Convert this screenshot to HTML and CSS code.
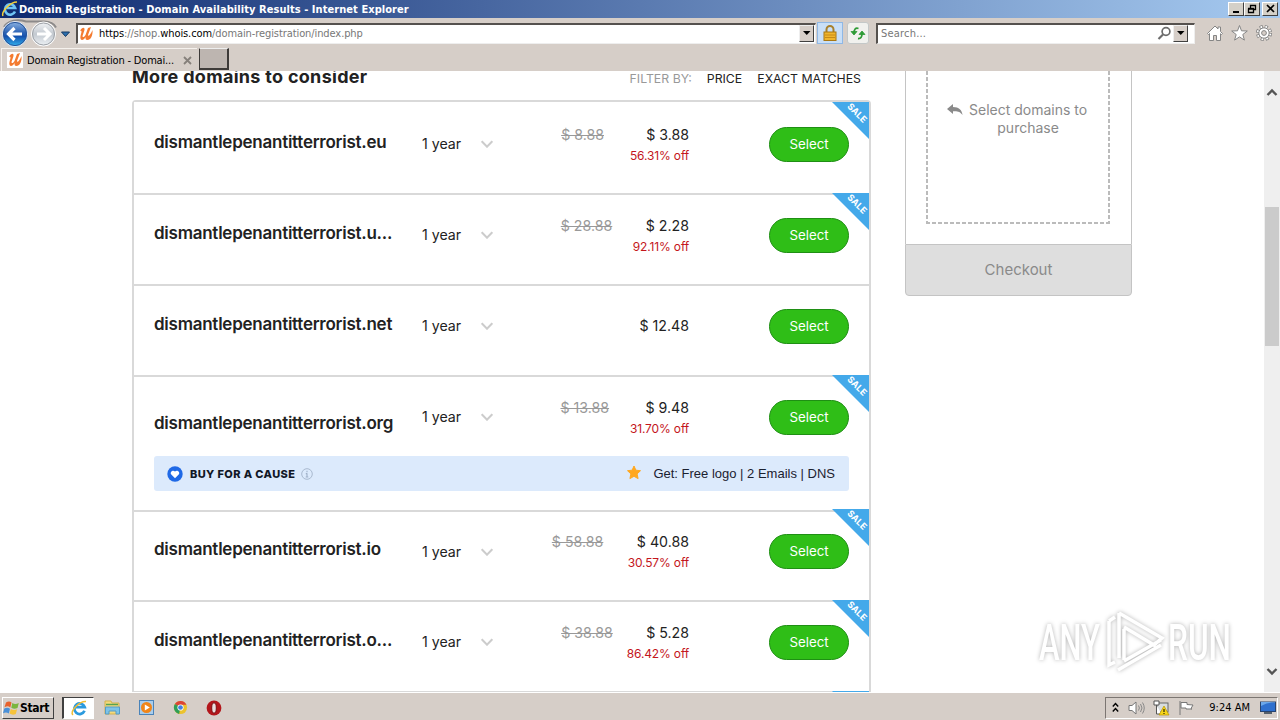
FILE: index.html
```html
<!DOCTYPE html>
<html lang="en">
<head>
    <meta charset="UTF-8">
    <title>Domain Registration - Domain Availability Results</title>
    <link rel="stylesheet" href="styles.css">
</head>
<body>
    <div class="titlebar">
        <svg class="ie" width="18" height="18" viewBox="0 0 18 18"><path d="M14 11.5A5.2 5.2 0 1 1 14.2 8H6" fill="none" stroke="#6fc4f5" stroke-width="2.6"/><path d="M2 16C0 12 9 2 16 2" fill="none" stroke="#f4d03a" stroke-width="1.5"/></svg>
        <span class="title">Domain Registration - Domain Availability Results - Internet Explorer</span>
        <div class="winbtns">
            <button class="winbtn"><svg width="11" height="10"><path d="M2 8h6" stroke="#000" stroke-width="2"/></svg></button>
            <button class="winbtn"><svg width="11" height="10"><path d="M3.5 4V1.5h5v4H7M1 4.5h5.5v4h-5v-4M3 1.5h6M1 5h6" fill="none" stroke="#000" stroke-width="1.3"/></svg></button>
            <button class="winbtn close"><svg width="11" height="10"><path d="M2 1l7 7M9 1L2 8" stroke="#000" stroke-width="1.7"/></svg></button>
        </div>
    </div>

    <div class="navbar">
        <svg class="backfwd" width="72" height="30" viewBox="0 0 72 30">
            <defs>
                <linearGradient id="blue" x1="0" y1="0" x2="0" y2="1"><stop offset="0" stop-color="#8fb6e4"/><stop offset=".45" stop-color="#2b62b4"/><stop offset=".6" stop-color="#1552ae"/><stop offset="1" stop-color="#35b7f2"/></linearGradient>
                <linearGradient id="grey" x1="0" y1="0" x2="0" y2="1"><stop offset="0" stop-color="#f3f5f7"/><stop offset=".5" stop-color="#c3c9d0"/><stop offset="1" stop-color="#eef3f6"/></linearGradient>
            </defs>
            <path d="M4 9C8 2 18 1 26 3.500H44c7 0 10 2 12 6" fill="none" stroke="#8c8a8a" stroke-width="2"/>
            <circle cx="15" cy="16" r="12.5" fill="url(#blue)" stroke="#e8eef6"/>
            <circle cx="15" cy="16" r="11.6" fill="none" stroke="#27549a"/>
            <path d="M8 16h14M14.5 10L8.5 16l6 6" fill="none" stroke="#fff" stroke-width="3.2"/>
            <circle cx="43.500" cy="16" r="12" fill="url(#grey)" stroke="#fff"/>
            <circle cx="43.500" cy="16" r="11" fill="none" stroke="#9da1a7"/>
            <path d="M37 16h13M44 10l6 6-6 6" fill="none" stroke="#fff" stroke-width="3"/>
            <path d="M61.500 14h8l-4 4.500z" fill="#2c6fae" stroke="#163a63"/>
        </svg>
        <div class="address">
            <svg width="16" height="16" viewBox="0 0 16 16"><path d="M2 5C4 1 7 1 6.500 4L4.500 10c0 2 2 1 3-1L10 2l3-1-3 8c0 2 2.500 0 4.500-5 .5 6-2 10-5 10-2 0-2-1-2-3-2 4-6 4-5-1l1-4c0-1-.5-1.500-1.500-1z" fill="#f47b30"/></svg>
            <span class="url">https<i>://shop.</i>whois.com<i>/domain-registration/index.php</i></span>
            <button class="drop"><svg width="8" height="5"><path d="M0 0h7.500L3.750 4z"/></svg></button>
        </div>
        <div class="lock"><svg width="16" height="18" viewBox="0 0 16 18"><path d="M4.500 9V5.500a3.500 3.500 0 0 1 7 0V9" fill="none" stroke="#a8802c" stroke-width="2"/><rect x="2" y="8" width="12" height="8.500" fill="#f0b52c" stroke="#a87713"/><path d="M3 11h10M3 13.500h10" stroke="#c78a16"/></svg></div>
        <div class="refresh"><svg width="18" height="16" viewBox="0 0 18 16" fill="none" stroke="#2f9b36" stroke-width="1.800"><path d="M9.500 3.500Q5 2 5 8.500"/><path d="M2 6.500h6L5 10z" fill="#2f9b36" stroke-width=".8"/><path d="M9 13.500Q13 14 13 8.500"/><path d="M10 9.500h6L13 6z" fill="#2f9b36" stroke-width=".8"/></svg></div>
        <div class="searchbox">
            <span class="hint">Search...</span>
            <svg width="15" height="15" viewBox="0 0 15 15"><circle cx="9" cy="5.500" r="3.900" fill="none" stroke="#6c6c6c" stroke-width="1.700"/><path d="M6 8.500L1.500 13" stroke="#6c6c6c" stroke-width="2.200"/></svg>
            <button class="drop"><svg width="8" height="5"><path d="M0 0h7.500L3.750 4z"/></svg></button>
        </div>
        <svg class="tools" width="68" height="20" viewBox="0 0 68 20" fill="#fff" stroke="#858585">
            <path d="M1.500 10.500L9 3l3 3V4h2.500v4.500l2 2-1 1-1-.8V17.500h-4v-5h-3v5h-4v-7l-1 1z"/>
            <path d="M33.500 2.500l2 5.300 5.800.2-4.500 3.500 1.600 5.600-4.900-3.200-4.900 3.200 1.600-5.600-4.500-3.500 5.800-.2z"/>
            <circle cx="58" cy="10" r="6.300" fill="none" stroke-width="3.600" stroke-dasharray="2.950 2"/>
            <circle cx="58" cy="10" r="6.100" fill="none" stroke="#fff" stroke-width="2.400" stroke-dasharray="1.600 3.190" stroke-dashoffset="-.6"/>
            <circle cx="58" cy="10" r="5.200"/><circle cx="58" cy="10" r="2.400" fill="#d6cec8"/>
        </svg>
    </div>

    <div class="tabs">
        <div class="tab">
            <svg width="16" height="16" viewBox="0 0 16 16"><rect width="16" height="16" fill="#fff"/><path d="M2 5C4 1 7 1 6.500 4L4.500 10c0 2 2 1 3-1L10 2l3-1-3 8c0 2 2.500 0 4.500-5 .5 6-2 10-5 10-2 0-2-1-2-3-2 4-6 4-5-1l1-4c0-1-.5-1.500-1.500-1z" fill="#f47b30"/></svg>
            <span class="tabname">Domain Registration - Domai...</span>
            <svg class="tabclose" width="9" height="9"><path d="M1 1l7 7M8 1L1 8" stroke="#86807b" stroke-width="1.800"/></svg>
        </div>
        <div class="newtab"></div>
    </div>

    <div class="page">
        <div class="main">
            <div class="head">
                <h2>More domains to consider</h2>
                <div class="filter"><span class="by">FILTER BY:</span><span class="fprice">PRICE</span><span class="fexact">EXACT MATCHES</span></div>
            </div>
            <div class="list">
                <div class="row">
                    <div class="domain">dismantlepenantitterrorist.eu</div>
                    <div class="term"><span>1 year</span><svg width="12" height="8"><path d="M.7 1.200L6 6.700l5.300-5.500"/></svg></div>
                    <div class="cost"><s>$ 8.88</s><b>$ 3.88</b><em>56.31% off</em></div>
                    <button class="select">Select</button>
                    <div class="sale"><span>SALE</span></div>
                </div>
                <div class="row">
                    <div class="domain">dismantlepenantitterrorist.u...</div>
                    <div class="term"><span>1 year</span><svg width="12" height="8"><path d="M.7 1.200L6 6.700l5.300-5.500"/></svg></div>
                    <div class="cost"><s>$ 28.88</s><b>$ 2.28</b><em>92.11% off</em></div>
                    <button class="select">Select</button>
                    <div class="sale"><span>SALE</span></div>
                </div>
                <div class="row">
                    <div class="domain">dismantlepenantitterrorist.net</div>
                    <div class="term"><span>1 year</span><svg width="12" height="8"><path d="M.7 1.200L6 6.700l5.300-5.500"/></svg></div>
                    <div class="cost single"><b>$ 12.48</b></div>
                    <button class="select">Select</button>
                </div>
                <div class="row tall">
                    <div class="domain">dismantlepenantitterrorist.org</div>
                    <div class="term"><span>1 year</span><svg width="12" height="8"><path d="M.7 1.200L6 6.700l5.300-5.500"/></svg></div>
                    <div class="cost"><s>$ 13.88</s><b>$ 9.48</b><em>31.70% off</em></div>
                    <button class="select">Select</button>
                    <div class="sale"><span>SALE</span></div>
                    <div class="cause">
                        <svg width="16" height="16" viewBox="0 0 16 16"><circle cx="8" cy="8" r="7.700" fill="#1f69e6"/><path d="M8 12.300L4.300 8.600C2.500 6.500 5.500 3.200 8 5.500c2.500-2.300 5.500 1 3.700 3.100z" fill="#fff"/></svg>
                        <span class="causename">BUY FOR A CAUSE</span>
                        <svg class="info" width="12" height="12" viewBox="0 0 12 12"><circle cx="6" cy="6" r="5.300" fill="none" stroke="#a9b9cf"/><path d="M6 2.800v1.500M6 5.300v3.900M4.800 5.600h1.200M4.700 9h2.600" stroke="#9fb0c8" stroke-width="1.100"/></svg>
                        <svg class="star" width="14" height="15" viewBox="0 0 14 15"><path d="M7 1l1.900 4.200 4.600.5-3.400 3.200 1 4.700L7 11.300l-4.100 2.300 1-4.700L.5 5.700l4.600-.5z" fill="#ffa820" stroke="#ffa820" stroke-linejoin="round"/></svg>
                        <span class="perks">Get: Free logo | 2 Emails | DNS</span>
                    </div>
                </div>
                <div class="row after">
                    <div class="domain">dismantlepenantitterrorist.io</div>
                    <div class="term"><span>1 year</span><svg width="12" height="8"><path d="M.7 1.200L6 6.700l5.300-5.500"/></svg></div>
                    <div class="cost"><s>$ 58.88</s><b>$ 40.88</b><em>30.57% off</em></div>
                    <button class="select">Select</button>
                    <div class="sale"><span>SALE</span></div>
                </div>
                <div class="row">
                    <div class="domain">dismantlepenantitterrorist.o...</div>
                    <div class="term"><span>1 year</span><svg width="12" height="8"><path d="M.7 1.200L6 6.700l5.300-5.500"/></svg></div>
                    <div class="cost"><s>$ 38.88</s><b>$ 5.28</b><em>86.42% off</em></div>
                    <button class="select">Select</button>
                    <div class="sale"><span>SALE</span></div>
                </div>
                <div class="row"><div class="sale"></div></div>
            </div>
        </div>

        <div class="cart">
            <div class="cartbody">
                <div class="empty">
                    <svg width="16" height="12" viewBox="0 0 16 12"><path d="M0 5L6 0v3c6 0 9 3 9.500 8C13 7.500 11 7 6 7.200V10z" fill="#8a8a8a"/></svg>
                    <p>Select domains to<br>purchase</p>
                </div>
            </div>
            <button class="checkout">Checkout</button>
        </div>

        <div class="scroll">
            <svg width="12" height="9"><path d="M1.500 7L6 2.500 10.500 7"/></svg>
            <div class="thumb"></div>
            <svg width="12" height="9"><path d="M1.500 2L6 6.500 10.500 2"/></svg>
        </div>

        <svg class="mark" width="200" height="76" viewBox="0 0 200 76">
            <g class="marktext">
                <text x="3" y="55" textLength="61" lengthAdjust="spacingAndGlyphs">ANY</text>
                <text x="132" y="55" textLength="63" lengthAdjust="spacingAndGlyphs">RUN</text>
            </g>
            <path d="M73 16v44l6-3M73 16l6-4M83 8v45M83 8l43 25-8 7-30-18M88 24v31M88 56l37-21M82 65l43-25" fill="none" stroke="#fff" stroke-width="3.500"/>
        </svg>
    </div>

    <div class="taskbar">
        <button class="start"><svg width="17" height="16" viewBox="0 0 17 16"><path d="M3 2.500C5 1 7 1 8.500 2.500L7.300 7.500C5.500 6 4 6 1.500 7.300z" fill="#e8622c"/><path d="M9.300 3c2 1.200 4 1.200 6.500 0l-1.300 5c-2.500 1.200-4 1-6.200-.3z" fill="#7ab63e"/><path d="M1.300 8.500c2.200-1.300 4-1 5.700.2L5.800 13.500C4 12.200 2 12.200 0 13.300z" fill="#4a90d8"/><path d="M7.800 9c2 1 4 1.300 6.300.2L12.800 14c-2.300 1-4 .8-6.200-.4z" fill="#f6c33b"/></svg><span class="startname">Start</span></button>
        <div class="quick">
            <div class="app active"><svg width="18" height="18" viewBox="0 0 18 18"><path d="M14.500 11.800A5.300 5.300 0 1 1 14.700 8.200H5" fill="none" stroke="#2b9ade" stroke-width="2.800"/><path d="M3 16C-1 13 9 2 16 2.500" fill="none" stroke="#efbd36" stroke-width="1.500"/></svg></div>
            <div class="app"><svg width="17" height="17" viewBox="0 0 17 17"><path d="M1 2h6l1 2h7v11H1z" fill="#f4da7c" stroke="#d2b14f"/><path d="M2 5.500h12" stroke="#58a352" stroke-width="1.500"/><path d="M1.500 8h14v7h-3.500v-3h-7v3H1.500z" fill="#7cc3e8" stroke="#549bc7"/></svg></div>
            <div class="app"><svg width="17" height="17" viewBox="0 0 17 17"><rect x="1.500" y="1.500" width="14" height="14" fill="#a9cdec" stroke="#4a83b9"/><circle cx="8.500" cy="8.500" r="5.500" fill="#f08519"/><path d="M6.800 5.500v6l5-3z" fill="#fff"/></svg></div>
            <div class="app"><svg width="15" height="15" viewBox="0 0 16 16"><circle cx="8" cy="8" r="7" fill="#ecc32d"/><path d="M8 8L2 4.300A7 7 0 0 1 14.300 5H8z" fill="#dc4437"/><path d="M8 8l-1.500 6.900A7 7 0 0 1 2 4.300z" fill="#2f9e58"/><circle cx="8" cy="8" r="3.300" fill="#fff"/><circle cx="8" cy="8" r="2.500" fill="#4480e0"/></svg></div>
            <div class="app"><svg width="16" height="16" viewBox="0 0 16 16"><circle cx="8" cy="8" r="7.400" fill="#b3161b"/><ellipse cx="8" cy="8" rx="2.300" ry="5.200" fill="#e9dfdf" stroke="#7b0d10"/></svg></div>
        </div>
        <div class="tray">
            <svg width="7" height="12" viewBox="0 0 7 12"><path d="M.8 4.500l2.700-3 2.700 3M.8 9.500l2.700-3 2.700 3" fill="none" stroke="#000" stroke-width="1.400"/></svg>
            <svg class="sound" width="17" height="16" viewBox="0 0 17 16"><path d="M1 5.500h3L8 2v12l-4-3.500H1z" fill="#fff" stroke="#777"/><path d="M10.500 5.500q1.800 2.500 0 5M12.500 4q3 4 0 8M14.500 2.500q3.500 5.500 0 11" fill="none" stroke="#888"/></svg>
            <svg width="17" height="16" viewBox="0 0 17 16"><rect x="4" y="3" width="11" height="9" fill="#d8dcdf" stroke="#666"/><path d="M1 1h5v4H1zM3.500 5v9h5" fill="#fff" stroke="#555"/><path d="M11 6l5 9H6z" fill="#f7d61a" stroke="#b79400" stroke-width=".7"/><path d="M11 9v3M11 13v1" stroke="#000"/></svg>
            <svg width="17" height="16" viewBox="0 0 17 16"><path d="M2 1v14M3 2.500h6v2l6 .5-2 3.500 1 .5H8V8H3z" fill="#fff" stroke="#777"/></svg>
            <span class="clock">9:24 AM</span>
            <svg width="16" height="14" viewBox="0 0 16 14"><rect x=".5" y="1" width="15" height="9.500" fill="#2f70ce" stroke="#27436f"/><path d="M1 5q7-4 14-3.500V1H1z" fill="#6ba7ea"/><path d="M4 12h8" stroke="#57606b" stroke-width="2"/></svg>
        </div>
    </div>
</body>
</html>
```
FILE: styles.css
```css
* {
    box-sizing: border-box;
}

body {
    margin: 0;
    width: 1280px;
    height: 720px;
    overflow: hidden;
    display: flex;
    flex-direction: column;
    background: #d6cec8;
    font-family: Inter, "Open Sans", sans-serif;
    color: #222;
}

button {
    font-family: inherit;
    padding: 0;
}

svg {
    flex: none;
}

/* window chrome */
.titlebar, .navbar, .tabs, .taskbar {
    font-family: "DejaVu Sans Condensed", "DejaVu Sans", sans-serif;
    font-stretch: condensed;
    font-size: 11px;
    color: #000;
    white-space: nowrap;
    flex: none;
}

.titlebar {
    height: 18px;
    display: flex;
    align-items: center;
    background: linear-gradient(to right, #0e2a70, #a6caf0);
    padding: 0 2px 0 1px;
}

.title {
    color: #fff;
    font-weight: bold;
    letter-spacing: .06px;
}

.winbtns {
    margin-left: auto;
    display: flex;
}

.winbtn {
    width: 16px;
    height: 14px;
    background: #d4d0c8;
    border: 1px solid;
    border-color: #fff #404040 #404040 #fff;
    display: flex;
    align-items: center;
    justify-content: center;
}

.close {
    margin-left: 2px;
}

.navbar {
    height: 30px;
    display: flex;
    align-items: center;
}

.address, .searchbox {
    height: 21px;
    background: #fff;
    border: 1px solid #eee;
    border-top: 2px solid #55514e;
    border-left: 2px solid #55514e;
    display: flex;
    align-items: center;
}

.address {
    width: 740px;
    margin-left: 4px;
    padding-right: 1px;
}

.url {
    margin-left: 5px;
    letter-spacing: -.09px;
}

.url i, .hint {
    font-style: normal;
    color: #777;
}

.drop {
    width: 15px;
    height: 17px;
    background: #d6cec8;
    border: 1px solid;
    border-color: #eee #404040 #404040 #eee;
    display: flex;
    align-items: center;
    justify-content: center;
}

.address .drop {
    margin-left: auto;
}

.lock, .refresh {
    height: 22px;
    display: flex;
    align-items: center;
    justify-content: center;
    border: 1px solid #8fb8e6;
    background: #c9dff7;
}

.lock {
    width: 26px;
    margin-left: 1px;
}

.refresh {
    width: 22px;
    margin-left: 4px;
    background: #f1f1ee;
    border-color: #c4c8c8;
    border-radius: 3px;
}

.searchbox {
    width: 319px;
    margin-left: 7px;
    padding-right: 6px;
}

.searchbox svg {
    margin-right: 1px;
}

.searchbox .drop svg {
    margin: 0;
}

.hint {
    margin: 0 auto 0 3px;
    letter-spacing: .2px;
}

.tools {
    margin-left: 11px;
}

.tabs {
    height: 23px;
    display: flex;
}

.tab {
    width: 196px;
    margin-left: 1px;
    border: 1px solid #f6f2ee;
    border-right: 0;
    border-bottom: 0;
    display: flex;
    align-items: center;
    padding-left: 5px;
}

.tabname {
    margin-left: 4px;
    letter-spacing: -.19px;
}

.tabclose {
    margin: 0 5px 0 auto;
}

.newtab {
    width: 30px;
    height: 22px;
    margin-left: 2px;
    background: #bdb5b0;
    border: 1px solid #3d3a38;
    border-top-color: #eee;
    border-width: 1px 2px 2px 1px;
}

/* page */
.page {
    height: 621px;
    flex: none;
    position: relative;
    display: flex;
    background: #fff;
    overflow: hidden;
    padding-left: 132px;
}

.main {
    width: 739px;
}

.head {
    height: 29px;
    display: flex;
    justify-content: space-between;
    white-space: nowrap;
}

h2 {
    margin: -6px 0 0;
    font-size: 18px;
    line-height: 24px;
    font-weight: 700;
    letter-spacing: .3px;
}

.filter {
    display: flex;
    font-size: 12.3px;
    line-height: 16px;
    padding-right: 10px;
}

.by {
    color: #999;
    margin-right: 15px;
}

.fprice {
    margin-right: 15px;
}

.list {
    border: 2px solid #d9d9d9;
    border-radius: 4px;
    height: 650px;
}

.row {
    position: relative;
    height: 91px;
    border-top: 2px solid #d9d9d9;
    padding: 23px 20px 0;
    display: flex;
    flex-wrap: wrap;
    align-items: flex-start;
    align-content: flex-start;
}

.row:first-child {
    border-top-color: #fff;
}

.row.tall {
    height: 135px;
}

.row.after {
    height: 90px;
    padding-top: 22px;
}

.domain {
    width: 268px;
    font-size: 17px;
    line-height: 20px;
    font-weight: 600;
    letter-spacing: -.25px;
    margin-top: 5px;
    white-space: nowrap;
}

.tall .domain {
    margin-top: 13px;
}

.term {
    width: 71px;
    margin: 8px 1px 0 0;
    font-size: 14.2px;
    line-height: 18px;
    display: flex;
    align-items: center;
    justify-content: space-between;
}

.after .term {
    margin-top: 9px;
}

.term svg path {
    fill: none;
    stroke: #ccc;
    stroke-width: 2;
}

.cost {
    width: 195px;
    display: flex;
    flex-wrap: wrap;
    justify-content: flex-end;
    font-size: 14.2px;
    line-height: 18px;
    margin-top: -1px;
}

.cost.single {
    margin-top: 8px;
}

.cost s {
    width: 85px;
    color: #999;
}

.cost b {
    font-weight: 400;
}

.cost em {
    width: 100%;
    text-align: right;
    font-style: normal;
    font-size: 12px;
    letter-spacing: -.15px;
    margin-top: 3px;
    color: #c4161c;
}

.select {
    width: 80px;
    height: 35px;
    margin-left: 80px;
    padding-bottom: 1px;
    border: 1px solid #1f8f14;
    border-radius: 18px;
    background: #2fbe17;
    color: #fff;
    font-size: 13.3px;
}

.sale {
    position: absolute;
    top: -2px;
    right: 0;
    width: 37px;
    height: 37px;
    background: #44a9ea;
    clip-path: polygon(0 0, 100% 0, 100% 100%);
}

.after .sale {
    top: -3px;
}

.sale span {
    position: absolute;
    left: 10px;
    top: 5px;
    width: 30px;
    text-align: center;
    font-size: 9px;
    line-height: 12px;
    font-weight: 700;
    color: #fff;
    transform: rotate(45deg);
}

.cause {
    width: 695px;
    height: 35px;
    margin-top: 18px;
    border-radius: 3px;
    background: #dceafc;
    display: flex;
    align-items: center;
    padding: 0 14px 0 13px;
    white-space: nowrap;
}

.causename {
    font-size: 11px;
    font-weight: 800;
    color: #111827;
    margin-left: 7px;
    letter-spacing: .38px;
}

.info {
    margin-left: 6px;
}

.star {
    margin-left: auto;
    margin-top: -2px;
}

.perks {
    font-family: "Liberation Sans", Arial, sans-serif;
    font-size: 13px;
    color: #1b2130;
    margin-left: 12px;
}

/* cart */
.cart {
    width: 227px;
    height: 225px;
    margin-left: 34px;
    display: flex;
    flex-direction: column;
}

.cartbody {
    height: 173px;
    border: 1px solid #c4c4c4;
    border-width: 0 1px;
    padding: 0 21px 20px 20px;
}

.empty {
    height: 153px;
    background:
        repeating-linear-gradient(#bbb 0 4px, #fff 4px 6px) left / 2px 100% no-repeat,
        repeating-linear-gradient(#bbb 0 4px, #fff 4px 6px) right / 2px 100% no-repeat,
        repeating-linear-gradient(to right, #bbb 0 4px, #fff 4px 6px) bottom / 100% 2px no-repeat;
    display: flex;
    padding: 30px 0 0 21px;
    color: #8a8a8a;
    font-size: 14px;
    line-height: 18px;
    text-align: center;
}

.empty svg {
    margin-top: 3px;
}

.empty p {
    margin: 0 0 0 6px;
    white-space: nowrap;
}

.checkout {
    height: 52px;
    padding-bottom: 1px;
    border: 1px solid #c4c4c4;
    border-radius: 0 0 4px 4px;
    background: #dedede;
    color: #8a8a8a;
    font-size: 15px;
}

.scroll {
    width: 16px;
    margin-left: auto;
    background: #efefef;
    display: flex;
    flex-direction: column;
    align-items: center;
    padding: 17px 0 16px;
}

.scroll path {
    fill: none;
    stroke: #555;
    stroke-width: 2.4;
}

.thumb {
    width: 14px;
    height: 139px;
    margin: 110px 0 auto;
    background: #cbcbcb;
}

.mark {
    position: absolute;
    left: 1036px;
    top: 534px;
    filter: drop-shadow(0 0 2px rgba(0, 0, 0, .3));
}

.marktext {
    font-family: Roboto, sans-serif;
    font-size: 50px;
    font-weight: 500;
    fill: #fff;
}

/* taskbar */
.taskbar {
    height: 28px;
    border-top: 1px solid #fff;
    display: flex;
    align-items: center;
    padding: 2px 2px 0;
}

.start {
    width: 52px;
    height: 22px;
    background: #d6cec8;
    border: 1px solid;
    border-color: #fff #404040 #404040 #fff;
    font-size: 12px;
    font-weight: bold;
    letter-spacing: -.3px;
    display: flex;
    align-items: center;
}

.quick {
    display: flex;
    margin-left: 8px;
}

.app {
    width: 32px;
    height: 22px;
    margin-right: 2px;
    display: flex;
    align-items: center;
    justify-content: center;
}

.active {
    background: #fff;
    border: 1px solid #fff;
    border-top-color: #404040;
    border-left: 2px solid #404040;
}

.tray {
    width: 173px;
    height: 22px;
    margin-left: auto;
    border: 1px solid;
    border-color: #7c7672 #fff #fff #7c7672;
    display: flex;
    align-items: center;
    gap: 8px;
    padding: 0 1px 0 6px;
}

.sound {
    margin-left: 1px;
}

.clock {
    margin-left: auto;
    margin-right: 2px;
}
```
